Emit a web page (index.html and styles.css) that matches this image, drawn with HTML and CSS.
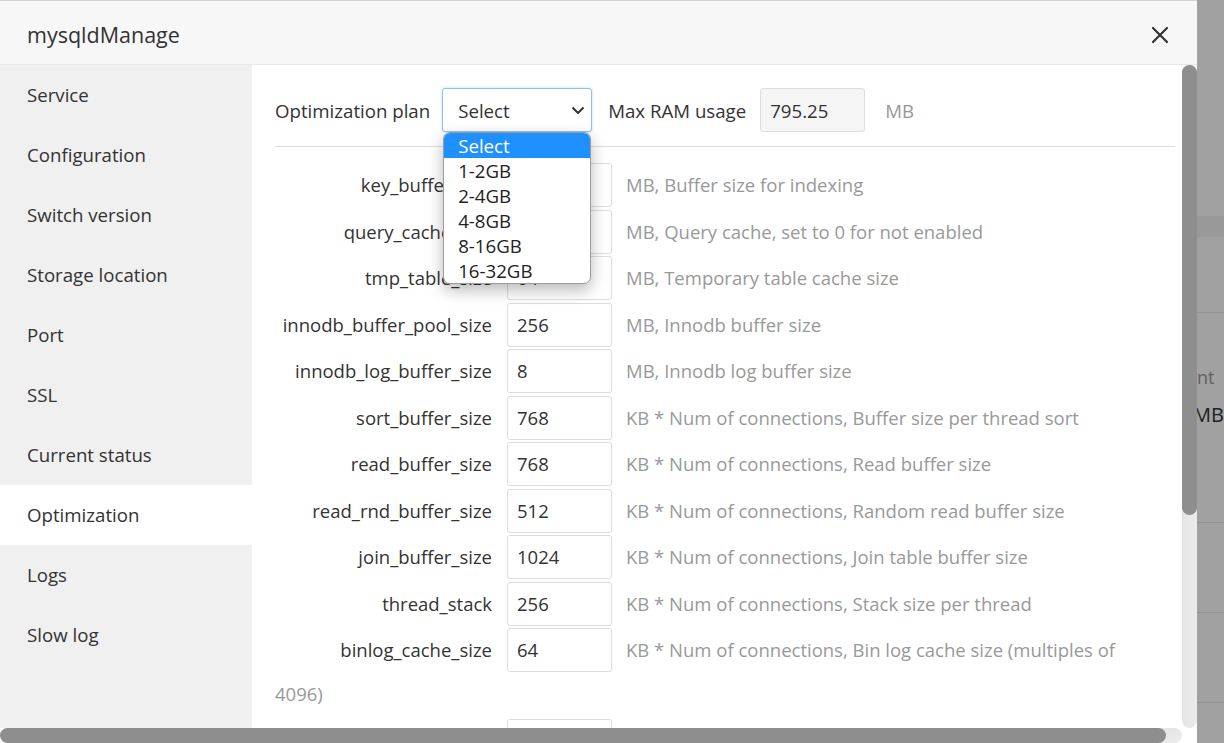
FILE: index.html
```html
<!DOCTYPE html>
<html lang="en">
<head>
<meta charset="utf-8">
<title>mysqldManage</title>
<link rel="stylesheet" href="styles.css">
</head>
<body>
<div class="page">
  <div class="page-top"></div>
  <div class="page-band"></div>
  <div class="page-section"></div>
  <div class="page-info">
    <div class="page-label">nt</div>
    <div class="page-value">MB</div>
  </div>
  <div class="page-line"></div>
  <div class="page-line"></div>
  <div class="page-line"></div>
</div>
<div class="overlay"></div>

<div class="modal">
  <header class="modal-header">
    <span class="modal-title">mysqldManage</span>
    <button class="close" type="button" aria-label="Close">
      <svg width="18" height="18" viewBox="0 0 18 18"><path d="M2 2 L16 16 M16 2 L2 16" stroke="#333" stroke-width="2.2" stroke-linecap="round" fill="none"/></svg>
    </button>
  </header>
  <div class="modal-body">
    <div class="viewport">
      <div class="body-inner">
        <nav class="sidebar">
          <div class="nav-item">Service</div>
          <div class="nav-item">Configuration</div>
          <div class="nav-item">Switch version</div>
          <div class="nav-item">Storage location</div>
          <div class="nav-item">Port</div>
          <div class="nav-item">SSL</div>
          <div class="nav-item">Current status</div>
          <div class="nav-item active">Optimization</div>
          <div class="nav-item">Logs</div>
          <div class="nav-item">Slow log</div>
        </nav>
        <section class="content">
          <div class="plan-row">
            <span class="plan-label">Optimization plan</span>
            <div class="select-wrap">
              <div class="select">
                <span>Select</span>
                <svg width="14" height="9" viewBox="0 0 14 9"><path d="M1.5 1.5 L7 7 L12.5 1.5" stroke="#333" stroke-width="2" fill="none" stroke-linejoin="round"/></svg>
              </div>
              <ul class="dropdown">
                <li class="selected">Select</li>
                <li>1-2GB</li>
                <li>2-4GB</li>
                <li>4-8GB</li>
                <li>8-16GB</li>
                <li>16-32GB</li>
              </ul>
            </div>
            <span class="ram-label">Max RAM usage</span>
            <input class="ram-input" type="text" value="795.25" disabled>
            <span class="unit">MB</span>
          </div>
          <hr class="divider">
          <p class="row"><span class="lbl">key_buffer_size</span><input class="val" type="text" value="8"><span class="desc">MB, Buffer size for indexing</span></p>
          <p class="row"><span class="lbl">query_cache_size</span><input class="val" type="text" value="0"><span class="desc">MB, Query cache, set to 0 for not enabled</span></p>
          <p class="row"><span class="lbl">tmp_table_size</span><input class="val" type="text" value="64"><span class="desc">MB, Temporary table cache size</span></p>
          <p class="row"><span class="lbl">innodb_buffer_pool_size</span><input class="val" type="text" value="256"><span class="desc">MB, Innodb buffer size</span></p>
          <p class="row"><span class="lbl">innodb_log_buffer_size</span><input class="val" type="text" value="8"><span class="desc">MB, Innodb log buffer size</span></p>
          <p class="row"><span class="lbl">sort_buffer_size</span><input class="val" type="text" value="768"><span class="desc">KB * Num of connections, Buffer size per thread sort</span></p>
          <p class="row"><span class="lbl">read_buffer_size</span><input class="val" type="text" value="768"><span class="desc">KB * Num of connections, Read buffer size</span></p>
          <p class="row"><span class="lbl">read_rnd_buffer_size</span><input class="val" type="text" value="512"><span class="desc">KB * Num of connections, Random read buffer size</span></p>
          <p class="row"><span class="lbl">join_buffer_size</span><input class="val" type="text" value="1024"><span class="desc">KB * Num of connections, Join table buffer size</span></p>
          <p class="row"><span class="lbl">thread_stack</span><input class="val" type="text" value="256"><span class="desc">KB * Num of connections, Stack size per thread</span></p>
          <p class="row"><span class="lbl">binlog_cache_size</span><input class="val" type="text" value="64"><span class="desc">KB * Num of connections, Bin log cache size (multiples of<br>4096)</span></p>
          <p class="row"><span class="lbl">thread_cache_size</span><input class="val" type="text" value="64"><span class="desc">Thread pool size</span></p>
        </section>
      </div>
    </div>
    <div class="vscroll"><div class="vthumb"></div></div>
    <div class="hscroll"><div class="hthumb"></div></div>
    <div class="corner"></div>
  </div>
</div>
</body>
</html>
```

FILE: styles.css
```css
* { box-sizing: border-box; }

html, body {
  margin: 0;
  padding: 0;
  height: 100%;
  overflow: hidden;
}

body {
  background: #ffffff;
  font-family: "Open Sans", "Noto Sans", sans-serif;
  color: #333;
}

/* page behind the modal */
.page {
  display: flex;
  flex-direction: column;
}
.page-top { height: 216px; }
.page-band { height: 21px; background: #f2f2f2; }
.page-section { height: 76px; border-bottom: 1px solid #e6e6e6; }
.page-info {
  padding: 52px 0 0 1197px;
  height: 210px;
  border-bottom: 1px solid #e6e6e6;
}
.page-label { font-size: 18px; color: #999; line-height: 24px; }
.page-value { font-size: 20px; color: #333; line-height: 24px; margin-top: 14px; margin-left: -4px; }
.page-line { height: 90px; border-bottom: 1px solid #e6e6e6; }

.overlay {
  position: fixed;
  inset: 0;
  background: rgba(0, 0, 0, 0.37);
}

/* modal */
.modal {
  position: fixed;
  left: 0;
  top: 0;
  width: 1197px;
  height: 743px;
  background: #fff;
  border-top: 1px solid #d2d2d2;
  display: flex;
  flex-direction: column;
}

.modal-header {
  height: 64px;
  flex: none;
  background: #f7f7f7;
  border-bottom: 1px solid #e8e8e8;
  display: flex;
  align-items: center;
  padding: 4px 27px 0 27px;
}
.modal-title {
  font-size: 21.5px;
  color: #333;
  flex: 1;
}
.close {
  border: 0;
  background: transparent;
  padding: 0;
  width: 18px;
  height: 18px;
  margin-right: 1px;
  display: flex;
}

.modal-body {
  flex: 1;
  min-height: 0;
  display: grid;
  grid-template-columns: 1182px 15px;
  grid-template-rows: 663px 15px;
}
.viewport { overflow: hidden; }
.vscroll {
  background: linear-gradient(to right, #e4e4e4, #ececec);
  border-radius: 8px;
}
.vthumb {
  height: 450px;
  background: #8e8e8e;
  border-radius: 8px;
}
.hscroll {
  background: linear-gradient(to bottom, #e4e4e4, #ececec);
  border-radius: 8px;
}
.hthumb {
  width: 1166px;
  height: 15px;
  background: #8e8e8e;
  border-radius: 8px;
}
.corner { background: #fff; }

.body-inner {
  width: 1198px;
  height: 977px;
  display: flex;
}

.sidebar {
  width: 252px;
  flex: none;
  background: #f0f0f0;
}
.nav-item {
  height: 60px;
  line-height: 60px;
  padding-left: 27px;
  font-size: 18.67px;
  color: #333;
}
.nav-item.active { background: #fff; }

.content {
  width: 946px;
  flex: none;
  padding: 23px 23px 0 23px;
  font-size: 18.67px;
}

.plan-row {
  display: flex;
  align-items: center;
  height: 44px;
}
.plan-label { margin-right: 12px; color: #333; }
.select-wrap { position: relative; width: 150px; height: 44px; }
.select {
  height: 44px;
  border: 1px solid #8fc0f2;
  border-radius: 3px;
  box-shadow: 0 0 3px rgba(102, 175, 233, 0.45);
  background: #fff;
  display: flex;
  align-items: center;
  justify-content: space-between;
  padding: 0 6px 0 15px;
  color: #333;
}
.dropdown {
  position: absolute;
  left: 1px;
  top: 44px;
  width: 148px;
  margin: 0;
  padding: 0;
  list-style: none;
  background: #fff;
  border: 1px solid #9c9c9c;
  border-radius: 7px;
  box-shadow: 0 6px 16px rgba(0, 0, 0, 0.28);
  overflow: hidden;
  z-index: 2;
}
.dropdown li {
  height: 25px;
  line-height: 25px;
  padding-left: 14px;
  color: #222;
}
.dropdown li.selected { background: #1e90ff; color: #fff; }

.ram-label { margin-left: 16px; margin-right: 14px; color: #333; }
.ram-input {
  width: 105px;
  height: 44px;
  border: 1px solid #ddd;
  border-radius: 3px;
  background: #f5f5f5;
  font: inherit;
  color: #333;
  padding: 0 0 0 9px;
}
.unit { margin-left: 20px; color: #999; }

.divider {
  border: 0;
  border-top: 1px solid #ddd;
  margin: 14px 0 16px 0;
}

.row {
  margin: 0 0 2.5px 0;
  line-height: 44px;
  font-size: 18.5px;
}
.lbl {
  display: inline-block;
  width: 217px;
  margin-right: 15px;
  text-align: right;
  vertical-align: top;
  color: #333;
}
.val {
  display: inline-block;
  vertical-align: top;
  width: 105px;
  height: 44px;
  border: 1px solid #ddd;
  border-radius: 3px;
  background: #fff;
  font: inherit;
  color: #333;
  padding: 0 0 0 9px;
  margin-right: 14px;
}
.desc { color: #999; }
```
